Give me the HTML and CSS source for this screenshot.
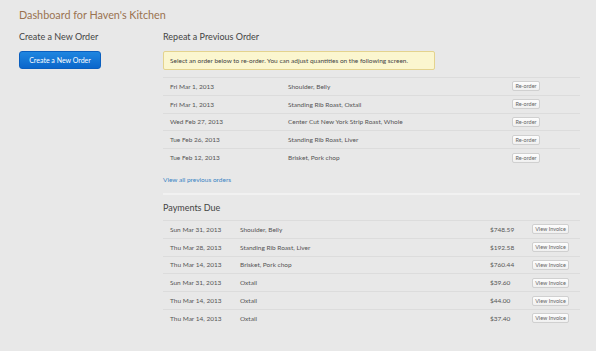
FILE: index.html
```html
<!DOCTYPE html>
<html>
<head>
<meta charset="utf-8">
<link rel="stylesheet" href="styles.css">
</head>
<body>
<h1 class="title">Dashboard for Haven's Kitchen</h1>
<div class="layout">
  <aside class="side">
    <h2 class="heading">Create a New Order</h2>
    <button class="btn-primary">Create a New Order</button>
  </aside>
  <main class="main">
    <section class="repeat">
      <h2 class="heading">Repeat a Previous Order</h2>
      <div class="alert">Select an order below to re-order. You can adjust quantities on the following screen.</div>
      <div class="rows">
        <div class="row r1"><span class="c-date">Fri Mar 1, 2013</span><span class="c-item">Shoulder, Belly</span><button class="btn-sm">Re-order</button></div>
        <div class="row r1"><span class="c-date">Fri Mar 1, 2013</span><span class="c-item">Standing Rib Roast, Oxtail</span><button class="btn-sm">Re-order</button></div>
        <div class="row r1"><span class="c-date">Wed Feb 27, 2013</span><span class="c-item">Center Cut New York Strip Roast, Whole</span><button class="btn-sm">Re-order</button></div>
        <div class="row r1"><span class="c-date">Tue Feb 26, 2013</span><span class="c-item">Standing Rib Roast, Liver</span><button class="btn-sm">Re-order</button></div>
        <div class="row r1"><span class="c-date">Tue Feb 12, 2013</span><span class="c-item">Brisket, Pork chop</span><button class="btn-sm">Re-order</button></div>
      </div>
      <a class="link" href="#">View all previous orders</a>
    </section>
    <section class="payments">
      <h2 class="heading">Payments Due</h2>
      <div class="rows">
        <div class="row r2"><span class="p-date">Sun Mar 31, 2013</span><span class="p-item">Shoulder, Belly</span><span class="p-amt">$748.59</span><button class="btn-sm inv">View Invoice</button></div>
        <div class="row r2"><span class="p-date">Thu Mar 28, 2013</span><span class="p-item">Standing Rib Roast, Liver</span><span class="p-amt">$192.58</span><button class="btn-sm inv">View Invoice</button></div>
        <div class="row r2"><span class="p-date">Thu Mar 14, 2013</span><span class="p-item">Brisket, Pork chop</span><span class="p-amt">$760.44</span><button class="btn-sm inv">View Invoice</button></div>
        <div class="row r2"><span class="p-date">Sun Mar 31, 2013</span><span class="p-item">Oxtail</span><span class="p-amt">$39.60</span><button class="btn-sm inv">View Invoice</button></div>
        <div class="row r2"><span class="p-date">Thu Mar 14, 2013</span><span class="p-item">Oxtail</span><span class="p-amt">$44.00</span><button class="btn-sm inv">View Invoice</button></div>
        <div class="row r2"><span class="p-date">Thu Mar 14, 2013</span><span class="p-item">Oxtail</span><span class="p-amt">$37.40</span><button class="btn-sm inv">View Invoice</button></div>
      </div>
    </section>
  </main>
</div>
</body>
</html>
```
FILE: styles.css
```css
html, body {
  margin: 0;
  padding: 0;
  background: #e8e8e8;
  font-family: "Lato", "Noto Sans", sans-serif;
  color: #555;
}
body {
  padding: 8px 16px 0 19px;
}
.title {
  margin: 0;
  font-size: 10.8px;
  font-weight: 400;
  color: #9a7350;
  line-height: 14px;
}
.layout {
  display: flex;
  margin-top: 9px;
}
.side {
  width: 144px;
  flex: none;
}
.main {
  flex: 1;
}
.heading {
  margin: 0;
  font-size: 9px;
  font-weight: 400;
  color: #444;
  line-height: 12px;
}
.btn-primary {
  display: block;
  margin-top: 8px;
  width: 82px;
  height: 18px;
  padding: 0;
  border: 1px solid #0a5fbf;
  border-radius: 3px;
  background: linear-gradient(#1f86e0, #0a66cb);
  color: #fff;
  font-family: inherit;
  font-size: 7px;
  white-space: nowrap;
}
.alert {
  margin-top: 8px;
  width: 264px;
  height: 17px;
  box-sizing: content-box;
  padding: 0 0 0 6px;
  background: #fbf6cf;
  border: 1px solid #e4d38e;
  border-radius: 2px;
  font-size: 6.5px;
  color: #444;
  line-height: 17px;
  white-space: nowrap;
}
.rows {
  margin-top: 7px;
}
.row {
  display: flex;
  align-items: center;
  height: 17.8px;
  border-top: 1px solid #dcdcdc;
  box-sizing: border-box;
  font-size: 6.5px;
  color: #555;
  white-space: nowrap;
}
.c-date {
  width: 125px;
  padding-left: 7px;
  box-sizing: border-box;
}
.c-item {
  width: 224px;
}
.btn-sm {
  height: 10px;
  padding: 0 2px;
  border: 1px solid #d0d0d0;
  border-radius: 2px;
  background: linear-gradient(#fdfdfd, #f0f0f0);
  font-family: inherit;
  font-size: 5.5px;
  color: #666;
  line-height: 8px;
  white-space: nowrap;
}
.r1 .btn-sm {
  width: 28px;
}
.link {
  display: block;
  margin-top: 9px;
  font-size: 6.5px;
  color: #3a84c4;
  text-decoration: none;
  line-height: 10px;
}
.payments {
  margin-top: 8px;
  border-top: 2px solid #f1f1f1;
  padding-top: 7px;
}
.payments .rows {
  margin-top: 6px;
}
.p-date {
  width: 77px;
  padding-left: 7px;
  box-sizing: border-box;
}
.p-item {
  width: 250px;
}
.p-amt {
  width: 42px;
}
.inv {
  width: 37px;
}
```
